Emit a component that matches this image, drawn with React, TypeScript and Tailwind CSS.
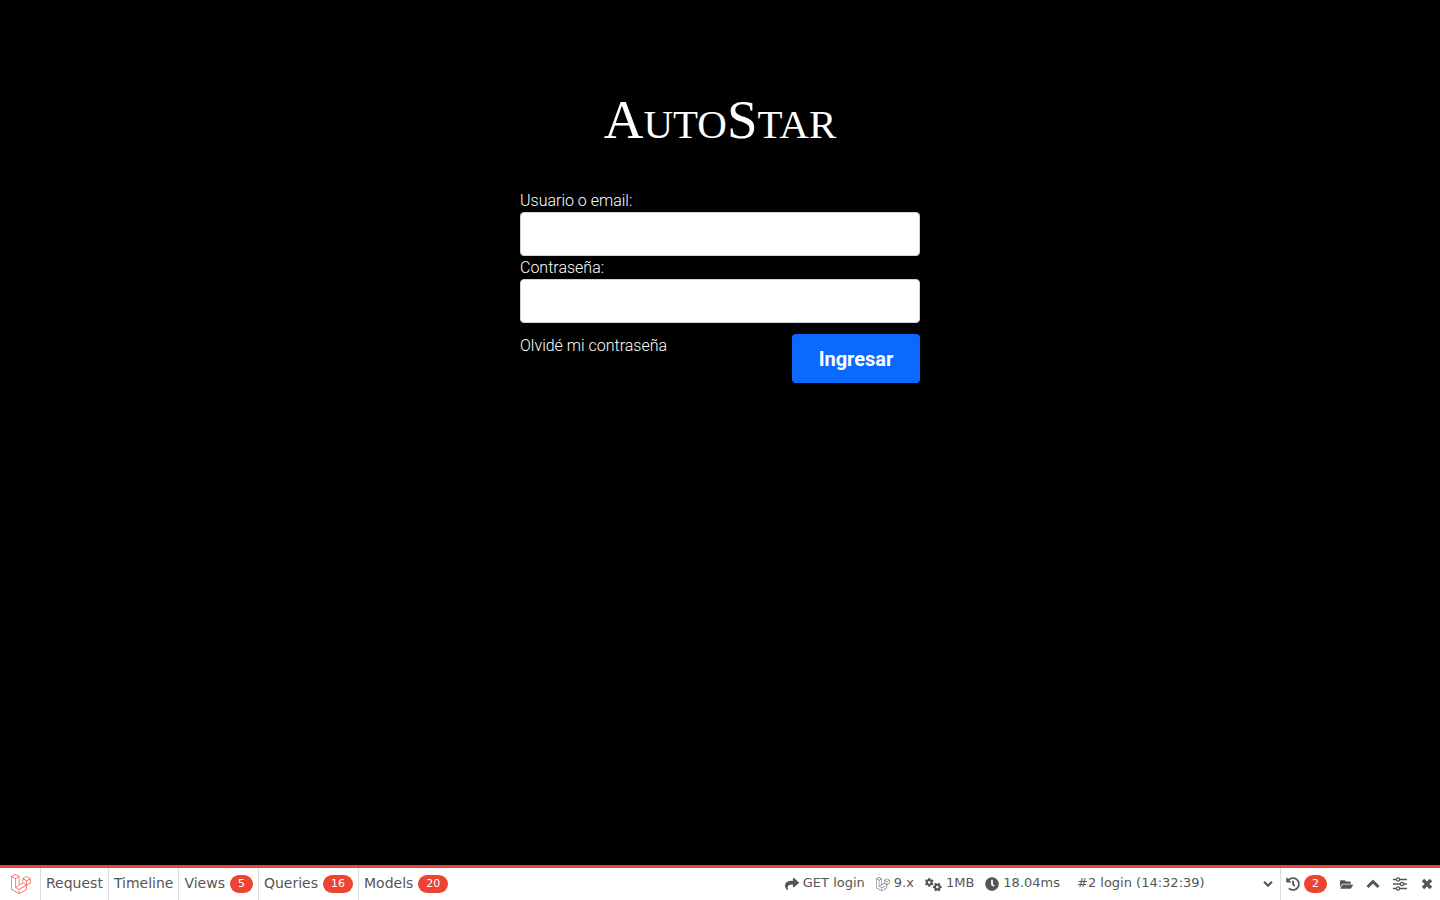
import { useState } from 'react';
import type { FormEvent } from 'react';
import { FaShare, FaLaravel, FaClock, FaHistory, FaFolderOpen } from 'react-icons/fa';
import { FaGears } from 'react-icons/fa6';

const tabs = [
  { name: 'Request' },
  { name: 'Timeline' },
  { name: 'Views', count: 5 },
  { name: 'Queries', count: 16 },
  { name: 'Models', count: 20 },
];

const indicators = [
  { text: 'GET login', icon: FaShare, size: 'h-[14px] w-[14px]' },
  { text: '9.x', icon: FaLaravel, size: 'h-[14px] w-[14px]' },
  { text: '1MB', icon: FaGears, size: 'h-[17px] w-[17px]' },
  { text: '18.04ms', icon: FaClock, size: 'h-[14px] w-[14px]' },
];

function Badge({ value }: { value: number }) {
  return (
    <span className="flex h-[18px] items-center rounded-full bg-[#eb4432] px-2 text-[11px] text-white">{value}</span>
  );
}

function ChevronIcon({ className }: { className: string }) {
  return (
    <svg viewBox="0 0 14 14" className={className} fill="none" stroke="currentColor" strokeWidth="3">
      <path d="M1.5 10 7 4.5 12.5 10" />
    </svg>
  );
}

function SlidersIcon() {
  return (
    <svg viewBox="0 0 16 16" className="h-4 w-4" fill="none" stroke="currentColor" strokeWidth="1.3" strokeLinecap="round">
      <path d="M1.5 3.5H4M8 3.5h6.5M1.5 8H8M12 8h2.5M1.5 12.5H4M8 12.5h6.5" />
      <circle cx="6" cy="3.5" r="1.6" />
      <circle cx="10" cy="8" r="1.6" />
      <circle cx="6" cy="12.5" r="1.6" />
    </svg>
  );
}

function CloseIcon() {
  return (
    <svg viewBox="0 0 12 12" className="h-3 w-3" fill="none" stroke="currentColor" strokeWidth="3.4">
      <path d="M2 2l8 8M10 2l-8 8" />
    </svg>
  );
}

function DebugBar() {
  return (
    <footer className="flex h-[35px] items-stretch border-t-[3px] border-[#eb4432] bg-white font-['DejaVu_Sans',sans-serif] text-[#555]">
      <a href="#" aria-label="Laravel" className="flex w-10 items-center justify-center pl-0.5 text-[#f4473c]">
        <FaLaravel className="h-5 w-5" />
      </a>
      <nav className="flex">
        {tabs.map((tab) => (
          <button key={tab.name} className="flex items-center gap-[5px] border-l border-[#ddd] px-[5px] text-sm">
            <span className="pb-0.5">{tab.name}</span>
            {tab.count && <Badge value={tab.count} />}
          </button>
        ))}
      </nav>

      <div className="ml-auto flex items-center gap-[11px] text-[13px]">
        {indicators.map((item) => (
          <span key={item.text} className="flex items-center gap-1">
            <item.icon className={item.size} />
            <span className="pb-0.5">{item.text}</span>
          </span>
        ))}
      </div>

      <div className="ml-[13px] grid w-[207px] items-center text-[13px]">
        <select aria-label="Solicitud" className="col-start-1 row-start-1 w-full appearance-none bg-transparent px-1 pb-0.5">
          <option>#2 login (14:32:39)</option>
        </select>
        <ChevronIcon className="pointer-events-none col-start-1 row-start-1 mr-[7px] h-[10px] w-[10px] rotate-180 justify-self-end" />
      </div>

      <div className="flex items-center border-l border-[#ddd] pl-[5px]">
        <button aria-label="Historial" className="flex items-center gap-1">
          <FaHistory className="h-[14px] w-[14px]" />
          <Badge value={2} />
        </button>
        <button aria-label="Abrir" className="ml-[13px]"><FaFolderOpen className="h-[13px] w-[13px]" /></button>
        <button aria-label="Minimizar" className="ml-[13px]"><ChevronIcon className="h-[14px] w-[14px]" /></button>
        <button aria-label="Ajustes" className="ml-3"><SlidersIcon /></button>
        <button aria-label="Cerrar" className="mr-[7px] ml-[13px]"><CloseIcon /></button>
      </div>
    </footer>
  );
}

export default function App() {
  const [usuario, setUsuario] = useState('');
  const [password, setPassword] = useState('');

  const handleSubmit = (e: FormEvent) => {
    e.preventDefault();
  };

  const inputClass = "block h-11 w-full rounded border border-[#ced4da] bg-white px-3 text-base text-black";

  return (
    <div className="flex min-h-screen flex-col bg-black">
      <main className="flex flex-1 flex-col items-center px-4 pt-[90px] font-['Roboto',sans-serif] font-light text-white">
        <h1 className="font-['Liberation_Serif',serif] text-[41px] leading-[60px] font-normal">
          <span className="text-[55px]">A</span>UTO<span className="text-[55px]">S</span>TAR
        </h1>

        <form onSubmit={handleSubmit} className="mt-[35px] w-full max-w-[400px]">
          <label htmlFor="usuario" className="block text-base leading-[23px]">Usuario o email:</label>
          <input id="usuario" type="text" value={usuario} onChange={(e) => setUsuario(e.target.value)} className={inputClass} />
          <label htmlFor="password" className="block text-base leading-[23px]">Contraseña:</label>
          <input id="password" type="password" value={password} onChange={(e) => setPassword(e.target.value)} className={inputClass} />
          <div className="mt-[11px] flex items-start justify-between">
            <a href="#" className="text-base leading-[23px]">Olvidé mi contraseña</a>
            <button type="submit" className="h-[49px] w-32 rounded bg-[#0a6aff] text-xl font-bold">Ingresar</button>
          </div>
        </form>
      </main>
      <DebugBar />
    </div>
  );
}
